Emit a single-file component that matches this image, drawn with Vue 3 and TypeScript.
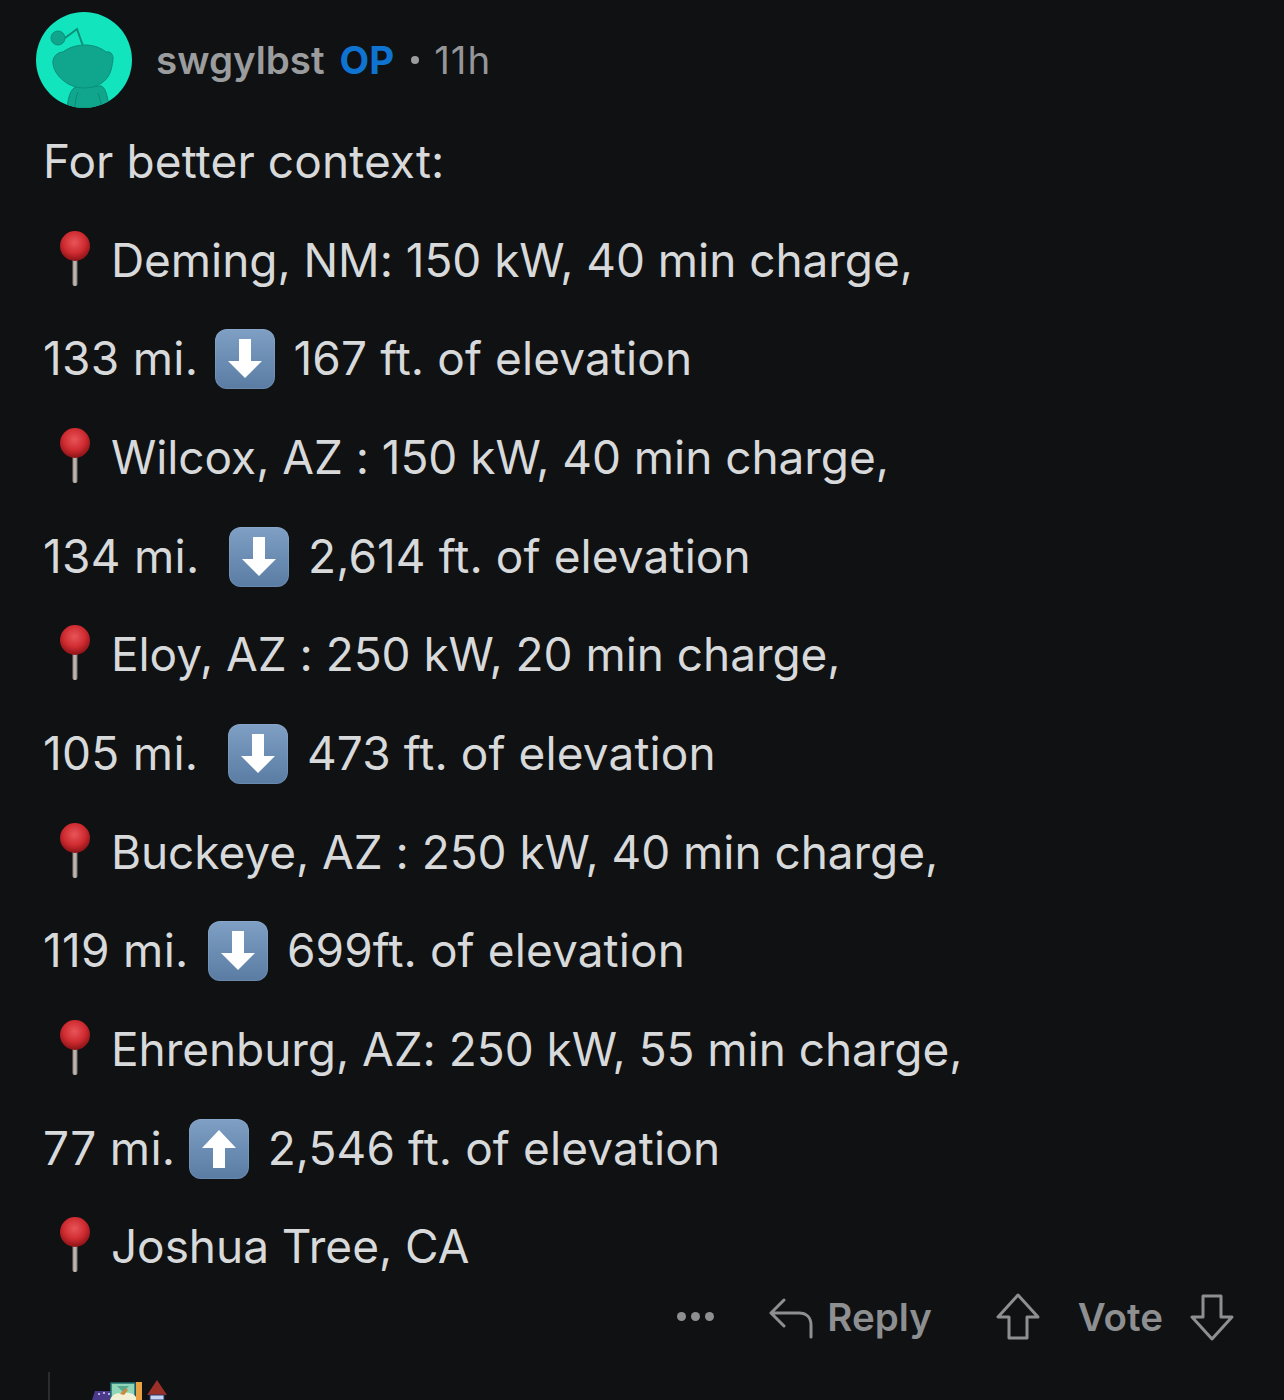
<template>
  <section class="comment">
    <header class="comment-head">
      <svg class="avatar" viewBox="0 0 96 96" aria-hidden="true">
        <defs>
          <clipPath id="avatar-clip"><circle cx="48" cy="48" r="48" /></clipPath>
        </defs>
        <g clip-path="url(#avatar-clip)">
          <rect width="96" height="96" fill="#12e4bd" />
          <path d="M31 96c1-9 3-17 7-20 3-2 6-2 9-2h18c4 1 6 8 8 20v2Z" fill="#0fa68d" stroke="#0b8a75" stroke-width="1" />
          <path d="M39 96c0-6 1-11 3-16M66 96c-1-5-2-10-4-15" fill="none" stroke="#0b8a75" stroke-width="1" />
          <path d="M29 26 41 17l6 17" fill="none" stroke="#0b8f79" stroke-width="2" />
          <circle cx="22" cy="26" r="7" fill="#0fa68d" stroke="#0b8f79" stroke-width="1" />
          <path d="M26 40C20 41 16 46 17 52c1 8 7 14 11 17 6 5 14 7 21 7 11 0 23-6 26-18 1-4 2-9 2-12 0-4-3-7-7-6-6-5-14-7-21-7-9 0-17 3-22 7Z" fill="#0fa68d" stroke="#0b8f79" stroke-width="1" />
        </g>
      </svg>
      <div class="meta">
        <span class="author">swgylbst</span>
        <span class="op">OP</span>
        <span class="dot" />
        <span class="age">11h</span>
      </div>
    </header>

    <div class="body">
      <p v-for="(line, i) in lines" :key="i" class="line" :class="{ 'pin-line': line.pin }">
        <svg v-if="line.pin" class="pin" viewBox="0 0 40 56" aria-hidden="true">
          <defs>
            <radialGradient :id="`pin-${i}`" cx="48%" cy="38%" r="60%">
              <stop offset="0" stop-color="#e8555a" />
              <stop offset="0.6" stop-color="#cf2c31" />
              <stop offset="1" stop-color="#8f1418" />
            </radialGradient>
            <linearGradient :id="`stem-${i}`" x1="0" x2="1" y1="0" y2="0">
              <stop offset="0" stop-color="#8c847f" />
              <stop offset="0.5" stop-color="#c9c3bd" />
              <stop offset="1" stop-color="#7b736e" />
            </linearGradient>
          </defs>
          <rect x="17.5" y="26" width="5" height="30" rx="2" :fill="`url(#stem-${i})`" />
          <circle cx="20" cy="16" r="15" :fill="`url(#pin-${i})`" />
        </svg>
        <template v-else><span class="before">{{ line.before }}</span></template>
        <span v-if="line.arrow" class="arrow-box" :style="{ marginLeft: `${3 + (line.nudge ?? 0)}px` }">
          <svg viewBox="0 0 60 60" aria-hidden="true">
            <path v-if="line.arrow === 'down'" d="M24 10h12v22h11L30 49 13 32h11Z" fill="#fff" />
            <path v-else d="M24 49h12V29h11L30 11 13 29h11Z" fill="#fff" />
          </svg>
        </span>{{ line.text }}
      </p>
    </div>

    <div class="actions">
      <span class="more"><i /><i /><i /></span>
      <button class="action reply" type="button">
        <svg viewBox="0 0 44 44" aria-hidden="true">
          <path d="M15 5 2 18l13 13M2 18h28c7 0 12 4 12 12v12" />
        </svg>
        Reply
      </button>
      <div class="vote">
        <svg viewBox="0 0 44 48" aria-hidden="true">
          <path d="M22 2 2 24h11v21h18V24h11Z" />
        </svg>
        <span class="vote-label">Vote</span>
        <svg viewBox="0 0 44 48" aria-hidden="true">
          <path d="M22 46 2 24h11V3h18v21h11Z" />
        </svg>
      </div>
    </div>

    <div class="next-comment">
      <span class="thread-line" />
      <svg class="next-avatar" viewBox="0 0 80 20" aria-hidden="true">
        <path d="M2 20 5 11h19l2 9Z" fill="#4b3a8a" />
        <path d="M8 14h2M13 13h2M18 14h2" stroke="#b9a8e8" stroke-width="2" />
        <rect x="21" y="3" width="24" height="17" fill="#8fd6b8" stroke="#1f6f70" stroke-width="1.5" />
        <path d="M27 6h12l-6 6Z" fill="#5aa88c" />
        <path d="M20 20c2-6 8-8 12-6 5-3 13-1 16 6Z" fill="#f3f0d8" />
        <path d="M30 14 36 8l2 2-4 5Z" fill="#c98a3a" />
        <rect x="46" y="2" width="6" height="18" fill="#e8a040" />
        <path d="M67 0 57 15h20Z" fill="#9a3028" />
        <rect x="60" y="15" width="14" height="5" fill="#c8d4f0" stroke="#2a3a70" stroke-width="1" />
      </svg>
    </div>
  </section>
</template>

<script setup lang="ts">
type Line = {
  pin?: boolean
  before?: string
  arrow?: 'up' | 'down'
  nudge?: number
  text: string
}

const lines: Line[] = [
  { text: 'For better context:' },
  { pin: true, text: ' Deming, NM: 150 kW, 40 min charge,' },
  { before: '133 mi. ', arrow: 'down', text: ' 167 ft. of elevation' },
  { pin: true, text: ' Wilcox, AZ : 150 kW, 40 min charge,' },
  { before: '134 mi.  ', arrow: 'down', text: ' 2,614 ft. of elevation' },
  { pin: true, text: ' Eloy, AZ : 250 kW, 20 min charge,' },
  { before: '105 mi.  ', arrow: 'down', text: ' 473 ft. of elevation' },
  { pin: true, text: ' Buckeye, AZ : 250 kW, 40 min charge,' },
  { before: '119 mi. ', arrow: 'down', nudge: 3, text: ' 699ft. of elevation' },
  { pin: true, text: ' Ehrenburg, AZ: 250 kW, 55 min charge,' },
  { before: '77 mi. ', arrow: 'up', nudge: -3, text: ' 2,546 ft. of elevation' },
  { pin: true, text: ' Joshua Tree, CA' }
]
</script>

<style>
body {
  background: #101113;
}
</style>

<style scoped>
.comment {
  height: 1400px;
  overflow: hidden;
  padding: 12px 0 0 36px;
  box-sizing: border-box;
  background: #101113;
  font-family: Inter, 'Liberation Sans', sans-serif;
}

.comment-head {
  display: flex;
  align-items: center;
  gap: 24px;
  height: 96px;
}

.avatar {
  width: 96px;
  height: 96px;
  display: block;
  flex-shrink: 0;
}

.meta {
  display: flex;
  align-items: baseline;
  font-size: 38.5px;
  line-height: 44px;
}

.author {
  font-weight: 600;
  color: #9a9c9e;
}

.op {
  margin-left: 15px;
  font-weight: 700;
  color: #0f74d1;
}

.dot {
  width: 8px;
  height: 8px;
  margin: 0 15px 0 17px;
  border-radius: 50%;
  background: #9a9c9e;
  align-self: center;
}

.age {
  letter-spacing: 1px;
  color: #94969a;
}

.body {
  margin-top: 4px;
  padding-left: 7px;
}

.line {
  margin: 0;
  height: 98.67px;
  line-height: 98.67px;
  font-size: 46px;
  letter-spacing: 0.1px;
  color: #d7d9da;
  white-space: pre;
}

.before {
  letter-spacing: 0.3px;
}

.pin-line {
  letter-spacing: -0.05px;
}

.pin {
  display: inline-block;
  width: 40px;
  height: 56px;
  margin: 0 3px 0 12px;
  vertical-align: -9px;
}

.arrow-box {
  display: inline-block;
  width: 60px;
  height: 60px;
  margin-right: 6px;
  border-radius: 12px;
  background: linear-gradient(#7f9fc4, #5a7ca3);
  box-shadow: inset 0 0 0 1px rgba(190, 210, 232, 0.15);
  vertical-align: -14px;
}

.arrow-box svg {
  display: block;
  width: 100%;
  height: 100%;
}

.actions {
  display: flex;
  justify-content: flex-end;
  align-items: center;
  height: 42px;
  padding-right: 50px;
  color: #8d8f91;
  font-size: 38.5px;
  font-weight: 600;
}

.more {
  display: flex;
  gap: 5px;
  margin-right: 55px;
}

.more i {
  width: 9px;
  height: 9px;
  border-radius: 50%;
  background: #8d8f91;
}

.action {
  display: flex;
  align-items: center;
  gap: 14px;
  padding: 0;
  border: 0;
  background: none;
  color: inherit;
  font: inherit;
}

.actions svg {
  display: block;
  fill: none;
  stroke: #8d8f91;
  stroke-width: 3;
  stroke-linejoin: round;
  stroke-linecap: round;
}

.reply svg {
  width: 44px;
  height: 44px;
}

.vote {
  display: flex;
  align-items: center;
  gap: 27px;
  margin-left: 64px;
}

.vote-label {
  margin-left: 11px;
}

.vote svg {
  width: 44px;
  height: 48px;
}

.next-comment {
  display: flex;
  align-items: flex-start;
  gap: 40px;
  margin-top: 34px;
  padding-left: 12px;
}

.thread-line {
  width: 2px;
  height: 40px;
  background: #2a2c2e;
}

.next-avatar {
  display: block;
  width: 80px;
  height: 20px;
  margin-top: 8px;
}
</style>
